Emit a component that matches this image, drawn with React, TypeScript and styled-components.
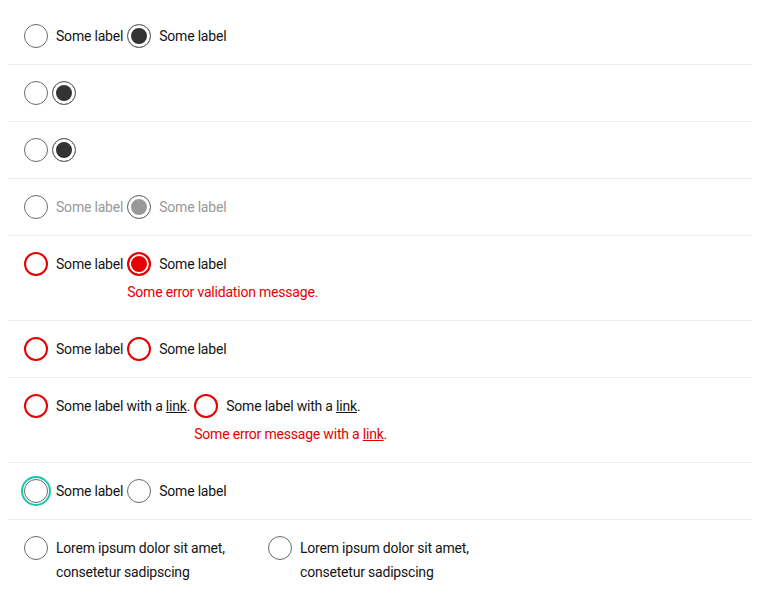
import React from "react";
import styled, { createGlobalStyle, css } from "styled-components";

const GlobalStyle = createGlobalStyle`
    body {
        margin: 8px;
        background: #fff;
        font-family: Roboto, "Liberation Sans", sans-serif;
        font-size: 14px;
        letter-spacing: -0.2px;
        color: #1a1a1a;
    }
`;

const colours = {
    text: "#141414",
    border: "#6b6b6b",
    checked: "#333333",
    disabled: "#999999",
    error: "#e60000",
    focus: "#17c6ad",
};

const Row = styled.div`
    display: flex;
    align-items: flex-start;
    gap: 4px;
    padding: 16px;
    border-bottom: 1px solid #ececec;
    &:last-child {
        border-bottom: none;
    }
`;

const Item = styled.div`
    display: flex;
    flex-direction: column;
`;

const Field = styled.label<{ $wide?: boolean }>`
    display: flex;
    align-items: flex-start;
    gap: 8px;
    width: ${(p) => (p.$wide ? "240px" : "auto")};
`;

type RadioProps = { $error?: boolean; $focus?: boolean };

const Radio = styled.input.attrs({ type: "radio" })<RadioProps>`
    appearance: none;
    flex: none;
    margin: 0;
    width: 24px;
    height: 24px;
    border-radius: 50%;
    border: 1px solid ${colours.border};
    background: #fff;
    &:checked {
        background: ${colours.checked};
        box-shadow: inset 0 0 0 3px #fff;
    }
    &:disabled:checked {
        background: ${colours.disabled};
    }
    ${(p) =>
        p.$error &&
        css`
            border: 2px solid ${colours.error};
            &:checked {
                background: ${colours.error};
                box-shadow: inset 0 0 0 2px #fff;
            }
        `}
    ${(p) =>
        p.$focus &&
        css`
            box-shadow: 0 0 0 1px #fff, 0 0 0 3px ${colours.focus};
        `}
`;

const Label = styled.span<{ $disabled?: boolean }>`
    line-height: 24px;
    color: ${(p) => (p.$disabled ? colours.disabled : colours.text)};
    a {
        color: inherit;
        text-decoration: underline;
    }
`;

const Message = styled.div`
    margin-top: 4px;
    line-height: 24px;
    color: ${colours.error};
    white-space: nowrap;
    a {
        color: inherit;
        text-decoration: underline;
    }
`;

type OptionProps = {
    name: string;
    checked?: boolean;
    disabled?: boolean;
    error?: boolean;
    focus?: boolean;
    wide?: boolean;
    children?: React.ReactNode;
    message?: React.ReactNode;
};

const Option: React.FC<OptionProps> = ({ name, checked, disabled, error, focus, wide, children, message }) => (
    <Item>
        <Field $wide={wide}>
            <Radio
                name={name}
                defaultChecked={checked}
                disabled={disabled}
                $error={error}
                $focus={focus}
            />
            {children && <Label $disabled={disabled}>{children}</Label>}
        </Field>
        {message && <Message>{message}</Message>}
    </Item>
);

const LinkLabel = () => (
    <>
        Some label with a <a href="#">link</a>.
    </>
);

export default function App() {
    return (
        <>
            <GlobalStyle />
            <Row>
                <Option name="r1">Some label</Option>
                <Option name="r1" checked>Some label</Option>
            </Row>
            <Row>
                <Option name="r2" />
                <Option name="r2" checked />
            </Row>
            <Row>
                <Option name="r3" />
                <Option name="r3" checked />
            </Row>
            <Row>
                <Option name="r4" disabled>Some label</Option>
                <Option name="r4" disabled checked>Some label</Option>
            </Row>
            <Row>
                <Option name="r5" error>Some label</Option>
                <Option name="r5" error checked message="Some error validation message.">
                    Some label
                </Option>
            </Row>
            <Row>
                <Option name="r6" error>Some label</Option>
                <Option name="r6" error>Some label</Option>
            </Row>
            <Row>
                <Option name="r7" error>
                    <LinkLabel />
                </Option>
                <Option
                    name="r7"
                    error
                    message={
                        <>
                            Some error message with a <a href="#">link</a>.
                        </>
                    }
                >
                    <LinkLabel />
                </Option>
            </Row>
            <Row>
                <Option name="r8" focus>Some label</Option>
                <Option name="r8">Some label</Option>
            </Row>
            <Row>
                <Option name="r9" wide>Lorem ipsum dolor sit amet, consetetur sadipscing</Option>
                <Option name="r9" wide>Lorem ipsum dolor sit amet, consetetur sadipscing</Option>
            </Row>
        </>
    );
}
